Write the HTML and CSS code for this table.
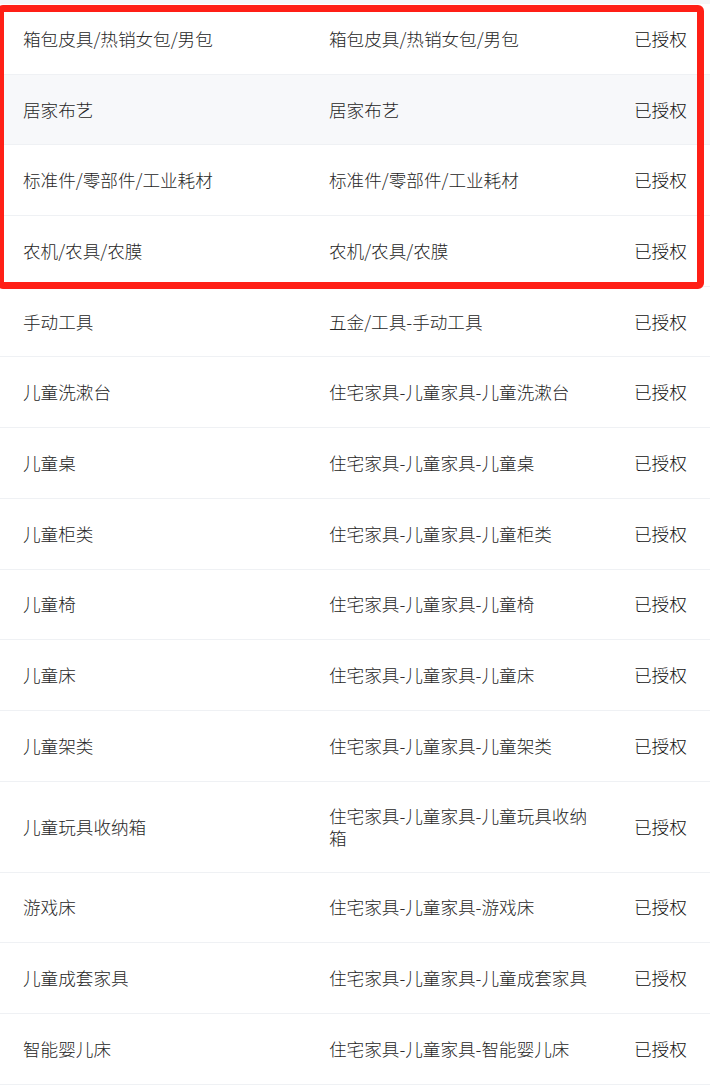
FILE: index.html
```html
<!DOCTYPE html>
<html lang="zh-CN">
<head>
<meta charset="utf-8">
<title>授权类目</title>
<link rel="stylesheet" href="styles.css">
</head>
<body>
<div class="page">
  <div class="table">
    <div class="row"><div class="cell">箱包皮具/热销女包/男包</div><div class="cell mid">箱包皮具/热销女包/男包</div><div class="cell status">已授权</div></div>
    <div class="row alt"><div class="cell">居家布艺</div><div class="cell mid">居家布艺</div><div class="cell status">已授权</div></div>
    <div class="row"><div class="cell">标准件/零部件/工业耗材</div><div class="cell mid">标准件/零部件/工业耗材</div><div class="cell status">已授权</div></div>
    <div class="row"><div class="cell">农机/农具/农膜</div><div class="cell mid">农机/农具/农膜</div><div class="cell status">已授权</div></div>
    <div class="row"><div class="cell">手动工具</div><div class="cell mid">五金/工具-手动工具</div><div class="cell status">已授权</div></div>
    <div class="row"><div class="cell">儿童洗漱台</div><div class="cell mid">住宅家具-儿童家具-儿童洗漱台</div><div class="cell status">已授权</div></div>
    <div class="row"><div class="cell">儿童桌</div><div class="cell mid">住宅家具-儿童家具-儿童桌</div><div class="cell status">已授权</div></div>
    <div class="row"><div class="cell">儿童柜类</div><div class="cell mid">住宅家具-儿童家具-儿童柜类</div><div class="cell status">已授权</div></div>
    <div class="row"><div class="cell">儿童椅</div><div class="cell mid">住宅家具-儿童家具-儿童椅</div><div class="cell status">已授权</div></div>
    <div class="row"><div class="cell">儿童床</div><div class="cell mid">住宅家具-儿童家具-儿童床</div><div class="cell status">已授权</div></div>
    <div class="row"><div class="cell">儿童架类</div><div class="cell mid">住宅家具-儿童家具-儿童架类</div><div class="cell status">已授权</div></div>
    <div class="row"><div class="cell">儿童玩具收纳箱</div><div class="cell mid">住宅家具-儿童家具-儿童玩具收纳箱</div><div class="cell status">已授权</div></div>
    <div class="row"><div class="cell">游戏床</div><div class="cell mid">住宅家具-儿童家具-游戏床</div><div class="cell status">已授权</div></div>
    <div class="row"><div class="cell">儿童成套家具</div><div class="cell mid">住宅家具-儿童家具-儿童成套家具</div><div class="cell status">已授权</div></div>
    <div class="row"><div class="cell">智能婴儿床</div><div class="cell mid">住宅家具-儿童家具-智能婴儿床</div><div class="cell status">已授权</div></div>
    <div class="highlight"></div>
  </div>
</div>
</body>
</html>
```

FILE: styles.css
```css
html, body {
  margin: 0;
  padding: 0;
  background: #ffffff;
}

body {
  font-family: "Noto Sans CJK SC", "Noto Sans", sans-serif;
  font-size: 17.6px;
  font-weight: 300;
  color: #262626;
  overflow: hidden;
}

.page {
  border-top: 4px solid #f5f6f8;
}

.table {
  position: relative;
}

.row {
  display: grid;
  grid-template-columns: 306px 305px 1fr;
  align-items: center;
  min-height: 69.7px;
  border-bottom: 1px solid #eff1f4;
  background: #ffffff;
}

.row.alt {
  background: #f7f8fa;
}

.cell {
  padding: 23px;
  line-height: 22px;
}

.cell.mid {
  padding-right: 14px;
}

.status {
  white-space: nowrap;
  color: #111111;
}

.highlight {
  position: absolute;
  left: -3px;
  top: 1px;
  width: 693px;
  height: 270px;
  border: 7px solid #ff1f16;
  border-radius: 6px;
  pointer-events: none;
}
```
